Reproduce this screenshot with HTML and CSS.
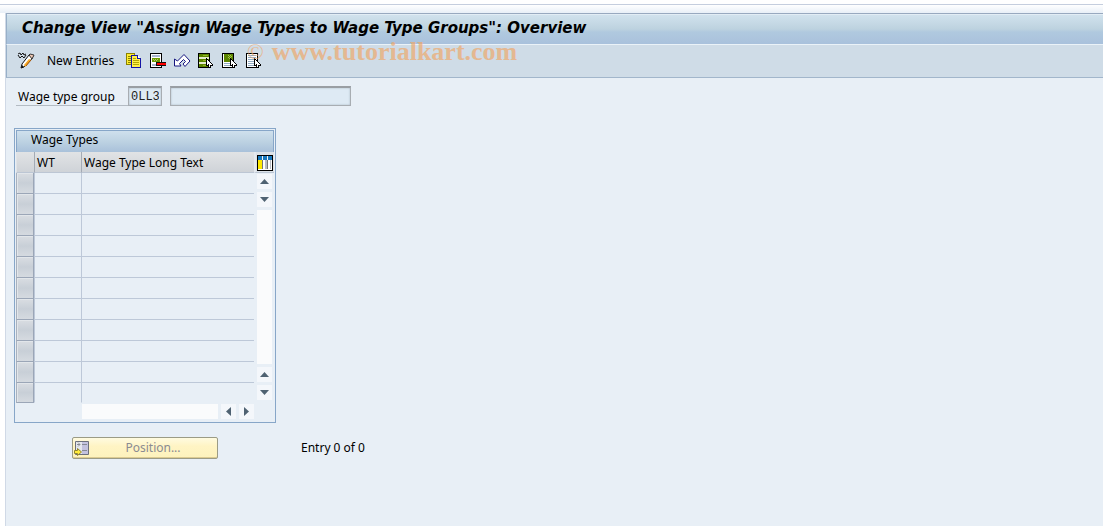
FILE: index.html
```
<!DOCTYPE html>
<html lang="en">
<head>
<meta charset="utf-8">
<title>Change View "Assign Wage Types to Wage Type Groups": Overview</title>
<link rel="stylesheet" href="styles.css">
</head>
<body>
<div class="strip"></div>
<main class="window">
  <header class="titlebar"><h1>Change View "Assign Wage Types to Wage Type Groups": Overview</h1></header>
  <div class="toolbar">
    <button class="tool" aria-label="Display/Change">
      <svg width="18" height="18" viewBox="0 0 18 18"><path d="M1 3l2-1 1 2 2-2 1 2 2-1M1 4l2 3 2-2 2 2 2-3" fill="none" stroke="#111"/><path d="M5 13L12 4l4 1-2 4-7 7-3 1z" fill="#fff" stroke="#111"/><path d="M7 14l5-6 2 1-6 7z" fill="#f5a623"/><path d="M9 15l5-6" stroke="#a85a10"/><path d="M12 4l1-1 4 1-2 4z" fill="#f0c8b4" stroke="#333"/><path d="M4 17l1-3 2 2z" fill="#111"/></svg>
    </button>
    <button class="tool tool-text">New Entries</button>
    <button class="tool" aria-label="Copy as">
      <svg width="18" height="18" viewBox="0 0 18 18" shape-rendering="crispEdges"><path d="M1.500 2.500h8v11h-8z" fill="#ffed30" stroke="#8b8200"/><path d="M3 5.500h3M3 7.500h3M3 9.500h3M3 11.500h3" stroke="#8b8200"/><path d="M6.500 4.500h6l3 3v9h-9z" fill="#fff04a" stroke="#1515a5"/><path d="M12.500 4.500v3h3" fill="#fff" stroke="#1515a5"/><path d="M8 7.500h3M8 9.500h6M8 11.500h6M8 13.500h6" stroke="#b5a800"/></svg>
    </button>
    <button class="tool" aria-label="Delete">
      <svg width="18" height="18" viewBox="0 0 18 18" shape-rendering="crispEdges"><path d="M1 2h12v15H1z"/><path d="M2 3h10v13H2z" fill="#fff"/><path d="M3 5h8M3 14h8" stroke="#a9b6d0" stroke-width="2"/><path d="M3 7h8v4H3z" fill="#6c9a00"/><path d="M4 8h1v1H4zM6 8h1v1H6zM8 8h1v1H8zM5 9h1v1H5zM7 9h1v1H7z" fill="#b5cc70"/><path d="M7 11h10v4H7z" fill="#111"/><path d="M8 12h9v2H8z" fill="#f00"/></svg>
    </button>
    <button class="tool" aria-label="Undo change">
      <svg width="18" height="18" viewBox="0 0 18 18"><path d="M1.500 8v7H8l-1.500-2.500 4-4 2 2L10 13l2 2.500 5-5.500-6-6.500L4.500 10z" fill="#fff" stroke="#161680" stroke-linejoin="round"/></svg>
    </button>
    <button class="tool" aria-label="Select all">
      <svg width="18" height="18" viewBox="0 0 18 18" shape-rendering="crispEdges"><path d="M1 2h12v15H1z"/><path d="M2 3h10v13H2z" fill="#e6eccc"/><path d="M2 3h10v3H2zM2 8h10v3H2zM2 13h10v3H2z" fill="#5b8500"/><path d="M6 4h5v1H6zM6 9h3v1H6zM6 14h3v1H6z" fill="#91b425"/><path d="M9 7h1v1h1v1h1v1h1v1h1v1h1v1h1v2h-2v2h-3v-2H9z"/><path d="M10 9h1v1h1v1h1v1h1v1h1v1h-2v2h-1v-3h-1v1h-1z" fill="#fff"/></svg>
    </button>
    <button class="tool" aria-label="Select block">
      <svg width="18" height="18" viewBox="0 0 18 18" shape-rendering="crispEdges"><path d="M1 2h12v15H1z"/><path d="M2 3h10v13H2z" fill="#fff"/><path d="M3 3h9v8H3z" fill="#5b8500"/><path d="M7 4h1v1H7zM9 4h1v1H9zM8 5h1v1H8zM10 5h1v1h-1zM7 6h1v1H7zM9 6h1v1H9zM8 7h1v1H8z" fill="#a5c54a"/><path d="M3 12.500h8M3 14.500h8" stroke="#91abc3"/><path d="M9 7h1v1h1v1h1v1h1v1h1v1h1v1h1v2h-2v2h-3v-2H9z"/><path d="M10 9h1v1h1v1h1v1h1v1h1v1h-2v2h-1v-3h-1v1h-1z" fill="#fff"/></svg>
    </button>
    <button class="tool" aria-label="Deselect all">
      <svg width="18" height="18" viewBox="0 0 18 18" shape-rendering="crispEdges"><path d="M1 2h12v15H1z"/><path d="M2 3h10v13H2z" fill="#fff"/><path d="M3 4.500h8M3 6.500h8M3 8.500h8M3 10.500h8M3 12.500h8M3 14.500h8" stroke="#91abc3"/><path d="M9 7h1v1h1v1h1v1h1v1h1v1h1v1h1v2h-2v2h-3v-2H9z"/><path d="M10 9h1v1h1v1h1v1h1v1h1v1h-2v2h-1v-3h-1v1h-1z" fill="#fff"/></svg>
    </button>
    <div class="watermark"><span class="copyright">©</span><span>www.tutorialkart.com</span></div>
  </div>
  <div class="content">
    <div class="field-row">
      <label for="group">Wage type group</label>
      <input id="group" class="code" value="0LL3" readonly>
      <input class="description" aria-label="Wage type group description" readonly>
    </div>
    <section class="panel">
      <h2>Wage Types</h2>
      <table>
        <colgroup><col class="c-select"><col class="c-code"><col class="c-text"><col class="c-scroll"></colgroup>
        <thead>
          <tr><th class="corner"></th><th>WT</th><th>Wage Type Long Text</th>
            <th class="config"><button aria-label="Table settings"><svg width="16" height="16" viewBox="0 0 16 16" shape-rendering="crispEdges"><path d="M0 0h16v16H0z"/><path d="M1 1h14v14H1z" fill="#fff"/><path d="M1 1h14v4H1z" fill="#1677bd"/><path d="M1 5h4v9H1z" fill="#ffea00"/><path d="M8 5h2v9H8zM13 5h1v9h-1z" fill="#b9bdc4"/><path d="M5 1h1v13H5zM10 1h1v13h-1z" fill="#f4f4f4"/><path d="M5 5h1v9H5zM10 5h1v9h-1z" fill="#777"/></svg></button></th></tr>
        </thead>
        <tbody>
          <tr><td class="sel"></td><td></td><td></td>
            <td class="scroll" rowspan="11"><div class="vscroll">
              <button aria-label="Scroll up"><svg width="9" height="5"><path d="M0 5l4.500-5L9 5z"/></svg></button>
              <button aria-label="Scroll down"><svg width="9" height="5"><path d="M0 0l4.500 5L9 0z"/></svg></button>
              <div class="track"></div>
              <button aria-label="Page up"><svg width="9" height="5"><path d="M0 5l4.500-5L9 5z"/></svg></button>
              <button aria-label="Page down"><svg width="9" height="5"><path d="M0 0l4.500 5L9 0z"/></svg></button>
            </div></td></tr>
          <tr><td class="sel"></td><td></td><td></td></tr>
          <tr><td class="sel"></td><td></td><td></td></tr>
          <tr><td class="sel"></td><td></td><td></td></tr>
          <tr><td class="sel"></td><td></td><td></td></tr>
          <tr><td class="sel"></td><td></td><td></td></tr>
          <tr><td class="sel"></td><td></td><td></td></tr>
          <tr><td class="sel"></td><td></td><td></td></tr>
          <tr><td class="sel"></td><td></td><td></td></tr>
          <tr><td class="sel"></td><td></td><td></td></tr>
          <tr><td class="sel"></td><td></td><td></td></tr>
        </tbody>
      </table>
      <div class="hscroll">
        <div class="track"></div>
        <button aria-label="Scroll left"><svg width="5" height="9"><path d="M5 0L0 4.500 5 9z"/></svg></button>
        <button aria-label="Scroll right"><svg width="5" height="9"><path d="M0 0l5 4.500L0 9z"/></svg></button>
      </div>
    </section>
    <footer class="actions">
      <button class="position" disabled>
        <svg width="16" height="16" viewBox="0 0 16 16"><path d="M1.500 1.500h13v13h-13z" fill="#e4e7ee" stroke="#6b6f7c"/><path d="M8 2h6v12H8z" fill="#c3c2df"/><path d="M3 4.500h3M8 4.500h5M8 10.500h5" stroke="#858994"/><path d="M4 2.500l2 2-2 2" fill="none" stroke="#999"/><path d="M.500 10.500h3v-2l4 3.500-4 3.500v-2h-3z" fill="#ffeb3b" stroke="#91852e"/></svg>
        <span>Position...</span>
      </button>
      <span>Entry 0 of 0</span>
    </footer>
  </div>
</main>
</body>
</html>
```
FILE: styles.css
```
* { box-sizing: border-box; }
body {
  margin: 0;
  min-height: 100vh;
  padding: 4px 0 0 5px;
  display: flex;
  flex-direction: column;
  background: #fff;
  color: #000;
  font: 12px/16px "Noto Sans", sans-serif;
}
button { font: inherit; color: inherit; border: 0; padding: 0; background: none; }
svg { display: block; }
.strip {
  height: 9px;
  margin-left: -5px;
  border-top: 1px solid #c5cede;
  background: linear-gradient(#fff, #e8eff7);
}
.window {
  flex: 1;
  border-left: 1px solid #d0d9e6;
  background: #e8eff6;
}
.titlebar {
  height: 32px;
  padding: 0 15px;
  border-top: 1px solid #98a9bf;
  border-bottom: 1px solid #eaf2f8;
  border-left: 1px solid #98b0c8;
  box-shadow: inset 0 1px #e2edf5;
  background: linear-gradient(#d2e3ee, #bdd2df 50%, #b0c9df 60%, #a9c1dc);
}
h1 {
  margin: 0;
  font: italic bold 15px/28px "DejaVu Sans", sans-serif;
  white-space: nowrap;
}
.toolbar {
  position: relative;
  height: 33px;
  padding: 0 10px;
  display: flex;
  align-items: center;
  gap: 6px;
  border-left: 1px solid #98b0c8;
  border-bottom: 1px solid #a2b6cb;
  background: #cfdce7;
}
.tool svg { margin-bottom: 3px; }
.tool-text { padding: 0 5px 0 6px; }
.watermark {
  position: absolute;
  left: 240px;
  top: -8px;
  display: flex;
  gap: 8px;
  font: bold 26px/30px "Liberation Serif", serif;
  color: #f0a564;
  opacity: 0.65;
  pointer-events: none;
}
.copyright { font-weight: normal; font-size: 22px; }
.content { padding: 8px 8px; }
.field-row { display: flex; gap: 8px; padding-left: 2px; }
.field-row label {
  width: 112px;
  margin-right: -8px;
  padding: 3px 0 0 2px;
  border-bottom: 1px solid #b3bbc3;
  white-space: nowrap;
}
.field-row input {
  height: 20px;
  padding: 0 2px;
  border: 1px solid #a8adb2;
  border-top: 2px solid #999ea3;
  border-radius: 0;
  background: #deeaf4;
  box-shadow: inset 0 0 2px #a4b1bc;
  outline: 0;
  color: #222;
  font: 12px/16px "Liberation Mono", monospace;
}
.code { width: 34px; }
.description { width: 181px; }
.panel {
  width: 262px;
  margin-top: 22px;
  padding: 1px;
  border: 1px solid #87a6c8;
}
h2 {
  margin: 0;
  height: 22px;
  padding-left: 14px;
  border: 1px solid #87a6c8;
  border-bottom: 0;
  background: linear-gradient(#cfe0ed, #bdd2e2 50%, #a9c1da);
  font: 12px/18px "Noto Sans", sans-serif;
}
table { width: 258px; table-layout: fixed; border-collapse: separate; border-spacing: 0; }
.c-select { width: 18px; }
.c-code { width: 47px; }
.c-text { width: 173px; }
.c-scroll { width: 20px; }
th, td { height: 21px; padding: 0; }
th {
  padding: 1px 0 0 2px;
  border-left: 1px solid #a4abb5;
  border-bottom: 1px solid #bcc6d4;
  background: linear-gradient(#e1e3e5, #cfd3d8);
  font-weight: normal;
  text-align: left;
  white-space: nowrap;
}
.corner { border-left-color: #e0e3e6; }
th.config { padding: 1px 0 0 1px; background: #dce2e8; border-left: 2px solid #e5eaf0; }
.config button { display: block; }
td { border-left: 1px solid #bdc8d8; border-bottom: 1px solid #bdc8d8; }
tbody tr:last-child td { height: 20px; border-bottom-color: transparent; }
td.sel, tbody tr:last-child td.sel {
  border: 1px solid #9ba6b7;
  border-top: 0;
  border-left-color: #a9b1bd;
  background: linear-gradient(#d9dde2, #c8cfd7 50%, #d5dae0);
  box-shadow: inset 1px 1px #e2e6ea;
}
td.scroll { padding-left: 3px; border: 0; vertical-align: top; }
.vscroll { height: 227px; width: 16px; display: flex; flex-direction: column; gap: 3px; padding-top: 1px; }
.vscroll button, .hscroll button {
  width: 15px;
  height: 15px;
  display: grid;
  place-items: center;
  flex: none;
  background: #f4f7fb;
  fill: #4f6272;
}
.track { flex: 1; background: #fafbfc; }
.vscroll .track { width: 15px; }
.hscroll { display: flex; gap: 3px; height: 18px; padding: 1px 20px 2px 66px; }
.actions { display: flex; align-items: center; gap: 83px; margin-top: 14px; padding-left: 58px; }
.position {
  width: 146px;
  height: 22px;
  padding: 0 1px;
  display: flex;
  align-items: center;
  border: 1px solid #9b9b85;
  border-radius: 2px;
  background: linear-gradient(#fffbe0, #fff4c4 40%, #fdf2bc);
  box-shadow: inset 0 -1px #dccb91;
  color: #8b8b91;
}
.position span { flex: 1; text-align: center; }
```
